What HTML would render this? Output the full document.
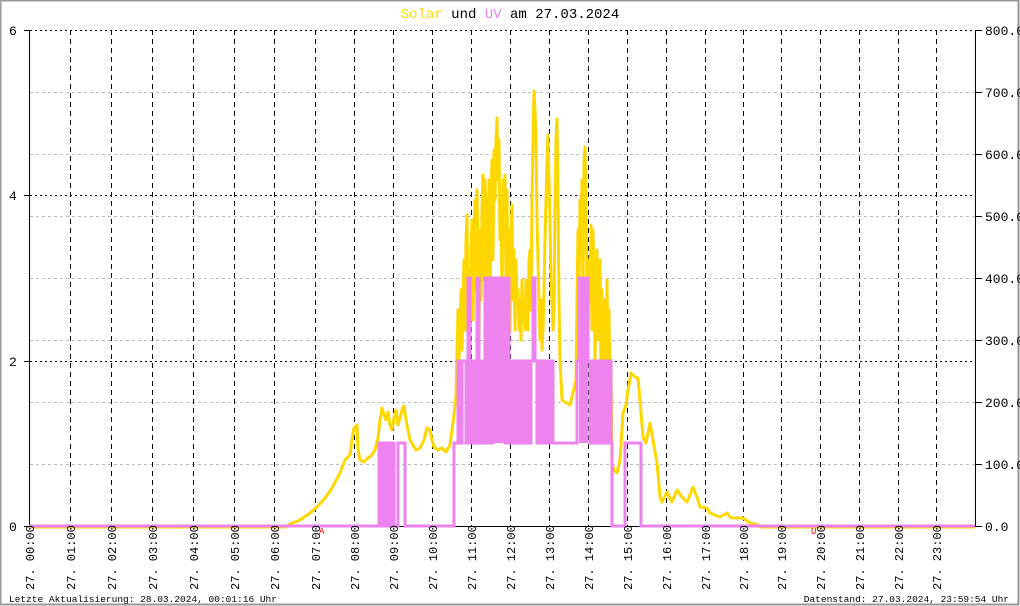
<!DOCTYPE html>
<html><head><meta charset="utf-8"><style>
html,body{margin:0;padding:0;background:#fff;}
svg{display:block;}
text{font-family:"Liberation Mono","DejaVu Sans Mono",monospace;}
</style></head><body>
<svg width="1020" height="606" viewBox="0 0 1020 606" xmlns="http://www.w3.org/2000/svg">
<rect x="0.5" y="0.5" width="1018" height="604" fill="#fff" stroke="#999" stroke-width="2"/>
<text x="510" y="18" font-size="14" text-anchor="middle" fill="#000"><tspan fill="#ffd700">Solar</tspan> und <tspan fill="#ee82ee">UV</tspan> am 27.03.2024</text>
<g stroke="#bbb" stroke-width="1" stroke-dasharray="3,3">
<line x1="30" y1="92.5" x2="975" y2="92.5"/><line x1="30" y1="154.5" x2="975" y2="154.5"/><line x1="30" y1="216.5" x2="975" y2="216.5"/><line x1="30" y1="278.5" x2="975" y2="278.5"/><line x1="30" y1="340.5" x2="975" y2="340.5"/><line x1="30" y1="402.5" x2="975" y2="402.5"/><line x1="30" y1="464.5" x2="975" y2="464.5"/>
</g>
<g stroke="#000" stroke-width="1" stroke-dasharray="2,3">
<line x1="30" y1="30.5" x2="975" y2="30.5"/><line x1="30" y1="195.5" x2="975" y2="195.5"/><line x1="30" y1="361.5" x2="975" y2="361.5"/>
</g>
<g stroke="#000" stroke-width="1" stroke-dasharray="5,4">
<line x1="70.5" y1="30" x2="70.5" y2="526"/><line x1="111.5" y1="30" x2="111.5" y2="526"/><line x1="152.5" y1="30" x2="152.5" y2="526"/><line x1="193.5" y1="30" x2="193.5" y2="526"/><line x1="234.5" y1="30" x2="234.5" y2="526"/><line x1="274.5" y1="30" x2="274.5" y2="526"/><line x1="315.5" y1="30" x2="315.5" y2="526"/><line x1="354.5" y1="30" x2="354.5" y2="526"/><line x1="393.5" y1="30" x2="393.5" y2="526"/><line x1="432.5" y1="30" x2="432.5" y2="526"/><line x1="471.5" y1="30" x2="471.5" y2="526"/><line x1="510.5" y1="30" x2="510.5" y2="526"/><line x1="549.5" y1="30" x2="549.5" y2="526"/><line x1="588.5" y1="30" x2="588.5" y2="526"/><line x1="627.5" y1="30" x2="627.5" y2="526"/><line x1="666.5" y1="30" x2="666.5" y2="526"/><line x1="705.5" y1="30" x2="705.5" y2="526"/><line x1="743.5" y1="30" x2="743.5" y2="526"/><line x1="781.5" y1="30" x2="781.5" y2="526"/><line x1="820.5" y1="30" x2="820.5" y2="526"/><line x1="859.5" y1="30" x2="859.5" y2="526"/><line x1="898.5" y1="30" x2="898.5" y2="526"/><line x1="936.5" y1="30" x2="936.5" y2="526"/>
</g>
<g stroke="#000" stroke-width="1">
<line x1="29.5" y1="30" x2="29.5" y2="527"/><line x1="975.5" y1="30" x2="975.5" y2="527"/><line x1="29" y1="526.5" x2="976" y2="526.5"/>
<line x1="24" y1="30.5" x2="30" y2="30.5"/><line x1="24" y1="195.5" x2="30" y2="195.5"/><line x1="24" y1="361.5" x2="30" y2="361.5"/><line x1="24" y1="526.5" x2="30" y2="526.5"/>
<line x1="975" y1="30.5" x2="982" y2="30.5"/><line x1="975" y1="92.5" x2="982" y2="92.5"/><line x1="975" y1="154.5" x2="982" y2="154.5"/><line x1="975" y1="216.5" x2="982" y2="216.5"/><line x1="975" y1="278.5" x2="982" y2="278.5"/><line x1="975" y1="340.5" x2="982" y2="340.5"/><line x1="975" y1="402.5" x2="982" y2="402.5"/><line x1="975" y1="464.5" x2="982" y2="464.5"/><line x1="975" y1="526.5" x2="982" y2="526.5"/>
</g>
<g font-size="13" fill="#000">
<text x="9" y="35">6</text><text x="9" y="200">4</text><text x="9" y="366">2</text><text x="9" y="531">0</text>
<text x="985" y="35">800.0</text><text x="985" y="97">700.0</text><text x="985" y="159">600.0</text><text x="985" y="221">500.0</text><text x="985" y="283">400.0</text><text x="985" y="345">300.0</text><text x="985" y="407">200.0</text><text x="985" y="469">100.0</text><text x="985" y="531">0.0</text>
</g>
<polyline fill="none" stroke="#ffd700" stroke-width="3" stroke-linejoin="round" points="29,527 285,527 290,524 300,520 310,513 318,506 325,498 332,488 340,473 345,460 350,455 352,440 354,428 357,425 358,450 360,460 364,462 368,458 372,455 375,450 378,438 380,420 382,408 384,415 386,420 388,412 390,425 392,430 394,418 396,410 398,425 400,418 402,410 404,406 406,420 408,430 410,440 413,445 416,450 420,448 424,440 427,428 430,430 432,440 434,447 438,450 442,448 446,452 450,445 452,430 454,415 456,395 458,310 459,360 460,330 461,290 462,350 463,300 464,260 465,330 466,240 467,215 468,300 469,270 470,350 471,250 472,220 473,320 474,240 475,200 476,290 477,190 478,250 479,340 480,230 481,300 482,210 483,175 484,280 485,180 486,210 487,320 488,240 489,180 490,300 491,200 492,160 493,260 494,150 495,200 496,140 497,118 498,180 499,140 500,240 501,200 502,300 503,180 504,230 505,175 506,280 507,190 508,320 509,230 510,330 511,240 512,205 513,300 514,250 515,330 516,260 517,300 518,290 519,330 520,300 521,340 522,280 523,320 524,300 525,330 526,280 527,310 528,330 529,260 530,250 531,310 532,200 533,140 534,91 535,110 536,140 537,220 538,260 539,300 540,340 541,300 542,350 543,330 544,290 545,240 546,200 547,160 548,135 549,180 550,220 551,280 552,300 553,330 554,310 555,200 556,140 557,119 558,200 559,300 560,360 561,380 562,400 565,402 570,405 573,393 576,380 577,300 578,230 579,290 580,200 581,260 582,180 583,300 584,160 585,147 586,200 587,280 588,340 589,260 590,300 591,225 592,330 593,230 594,280 595,360 596,300 597,250 598,340 599,300 600,260 601,370 602,290 603,330 604,380 605,300 606,360 607,280 608,360 609,310 610,400 611,360 612,463 614,470 617,473 620,460 623,413 626,405 628,390 631,373 635,377 638,378 640,400 643,437 646,443 650,423 653,440 657,463 660,497 662,502 667,492 672,502 677,490 682,497 687,502 693,487 697,497 700,507 707,508 710,513 720,517 727,513 730,517 733,518 743,518 750,523 758,525 760,527 975,527"/>
<g fill="#ee82ee">
<rect x="379" y="443" width="10" height="83"/><rect x="493" y="278" width="12" height="165"/><rect x="579" y="278" width="9" height="165"/>
</g>
<path fill="none" stroke="#ee82ee" stroke-width="3" d="M29,526 H379 V443 H381 V526 H383 V443 H385 V526 H387 V443 H389 V526 H392 V443 H394 V526 H398 V443 H405 V526 H454 V443 H458 V361 H460 V443 H462 V361 H466 V443 H468 V278 H470 V443 H472 V361 H474 V443 H477 V278 H479 V443 H481 V361 H483 V443 H485 V278 H487 V443 H489 V278 H491 V443 H493 V278 H505 V443 H507 V278 H509 V443 H511 V361 H513 V443 H515 V361 H517 V443 H519 V361 H521 V443 H523 V361 H525 V443 H527 V361 H529 V443 H531 V361 H533 V278 H535 V361 H537 V443 H539 V361 H541 V443 H543 V361 H545 V443 H547 V361 H549 V443 H551 V361 H553 V443 H577 V361 H579 V278 H588 V361 H590 V443 H592 V361 H594 V443 H596 V361 H598 V443 H600 V361 H602 V443 H604 V361 H606 V443 H608 V361 H611 V443 H612 V526 H625 V443 H641 V526 H975"/>
<text x="319" y="534" font-size="9" fill="#e00">A</text>
<text x="811" y="534" font-size="9" fill="#e00">U</text>
<g font-size="12" fill="#000">
<text transform="translate(34,590) rotate(-90)">27. 00:00</text>
<text transform="translate(75,590) rotate(-90)">27. 01:00</text>
<text transform="translate(116,590) rotate(-90)">27. 02:00</text>
<text transform="translate(157,590) rotate(-90)">27. 03:00</text>
<text transform="translate(198,590) rotate(-90)">27. 04:00</text>
<text transform="translate(239,590) rotate(-90)">27. 05:00</text>
<text transform="translate(279,590) rotate(-90)">27. 06:00</text>
<text transform="translate(320,590) rotate(-90)">27. 07:00</text>
<text transform="translate(359,590) rotate(-90)">27. 08:00</text>
<text transform="translate(398,590) rotate(-90)">27. 09:00</text>
<text transform="translate(437,590) rotate(-90)">27. 10:00</text>
<text transform="translate(476,590) rotate(-90)">27. 11:00</text>
<text transform="translate(515,590) rotate(-90)">27. 12:00</text>
<text transform="translate(554,590) rotate(-90)">27. 13:00</text>
<text transform="translate(593,590) rotate(-90)">27. 14:00</text>
<text transform="translate(632,590) rotate(-90)">27. 15:00</text>
<text transform="translate(671,590) rotate(-90)">27. 16:00</text>
<text transform="translate(710,590) rotate(-90)">27. 17:00</text>
<text transform="translate(748,590) rotate(-90)">27. 18:00</text>
<text transform="translate(786,590) rotate(-90)">27. 19:00</text>
<text transform="translate(825,590) rotate(-90)">27. 20:00</text>
<text transform="translate(864,590) rotate(-90)">27. 21:00</text>
<text transform="translate(903,590) rotate(-90)">27. 22:00</text>
<text transform="translate(941,590) rotate(-90)">27. 23:00</text>
</g>
<text x="9" y="602" font-size="9.5" fill="#000">Letzte Aktualisierung: 28.03.2024, 00:01:16 Uhr</text>
<text x="1009" y="602" font-size="9.5" fill="#000" text-anchor="end">Datenstand: 27.03.2024, 23:59:54 Uhr</text>
</svg>
</body></html>
